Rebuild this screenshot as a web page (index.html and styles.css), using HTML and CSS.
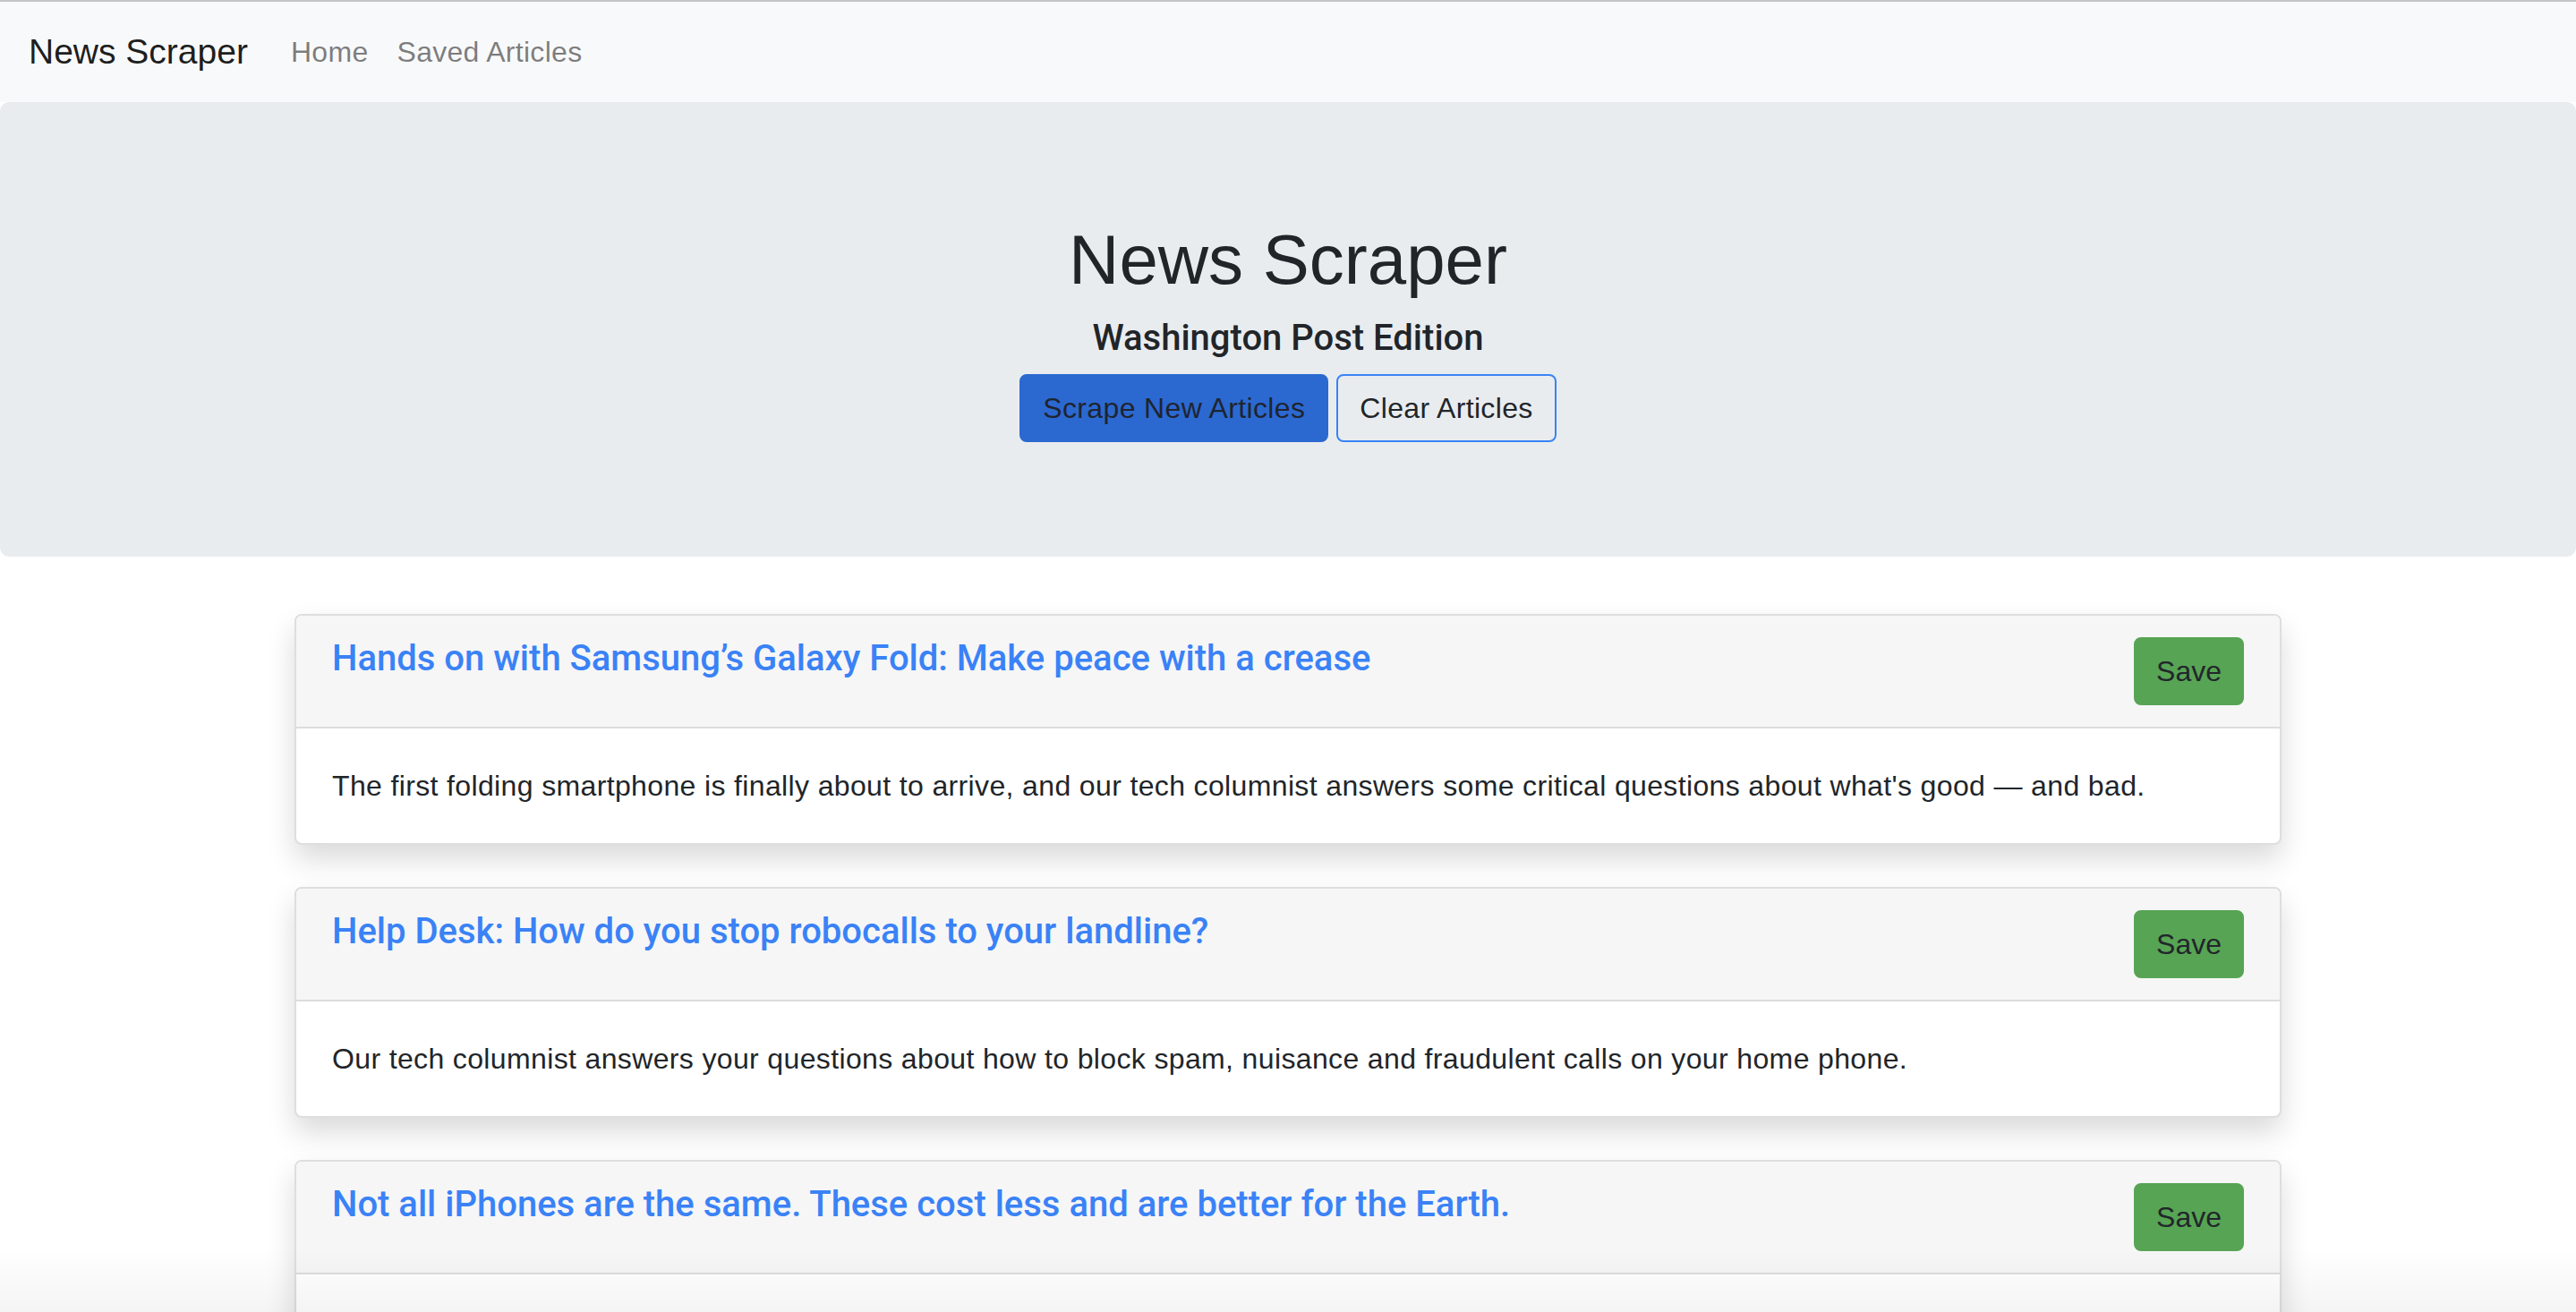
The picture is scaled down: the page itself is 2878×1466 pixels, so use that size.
FILE: index.html
```html
<!DOCTYPE html>
<html lang="en">
<head>
<meta charset="utf-8">
<title>News Scraper</title>
<link rel="stylesheet" href="styles.css">
</head>
<body>
<nav class="navbar">
  <a class="brand" href="#">News Scraper</a>
  <a class="nav-link" href="#">Home</a>
  <a class="nav-link" href="#">Saved Articles</a>
</nav>

<header class="jumbotron">
  <h1 class="jumbo-title">News Scraper</h1>
  <h5 class="jumbo-sub">Washington Post Edition</h5>
  <div class="jumbo-actions">
    <button class="btn btn-primary">Scrape New Articles</button>
    <button class="btn btn-outline">Clear Articles</button>
  </div>
</header>

<main class="container">
  <article class="card">
    <div class="card-header">
      <h5 class="card-title"><a href="#">Hands on with Samsung’s Galaxy Fold: Make peace with a crease</a></h5>
      <button class="btn btn-save">Save</button>
    </div>
    <div class="card-body">
      <p>The first folding smartphone is finally about to arrive, and our tech columnist answers some critical questions about what's good — and bad.</p>
    </div>
  </article>

  <article class="card">
    <div class="card-header">
      <h5 class="card-title"><a href="#">Help Desk: How do you stop robocalls to your landline?</a></h5>
      <button class="btn btn-save">Save</button>
    </div>
    <div class="card-body">
      <p>Our tech columnist answers your questions about how to block spam, nuisance and fraudulent calls on your home phone.</p>
    </div>
  </article>

  <article class="card">
    <div class="card-header">
      <h5 class="card-title"><a href="#">Not all iPhones are the same. These cost less and are better for the Earth.</a></h5>
      <button class="btn btn-save">Save</button>
    </div>
    <div class="card-body">
      <p>Refurbished phones can save you money and cut down on electronic waste.</p>
    </div>
  </article>
</main>

<div class="bottom-fade"></div>
</body>
</html>
```

FILE: styles.css
```css
* {
  box-sizing: border-box;
}

html, body {
  margin: 0;
  padding: 0;
}

body {
  font-family: "Liberation Sans", Arial, sans-serif;
  font-size: 32px;
  line-height: 1.5;
  color: #212529;
  background: #ffffff;
  border-top: 2px solid #c4c4c6;
}

a {
  text-decoration: none;
}

/* Navbar */
.navbar {
  display: flex;
  align-items: center;
  background: #f8f9fa;
  padding: 16px 32px;
}

.brand {
  font-size: 39px;
  line-height: 60px;
  padding: 10px 0;
  margin-right: 32px;
  color: rgba(0, 0, 0, 0.9);
}

.nav-link {
  padding: 16px;
  font-size: 32px;
  line-height: 48px;
  letter-spacing: 0.3px;
  color: rgba(0, 0, 0, 0.5);
}

/* Jumbotron */
.jumbotron {
  background: #e9ecef;
  padding: 128px 64px;
  margin-bottom: 64px;
  border-radius: 10px;
  text-align: center;
}

.jumbo-title {
  margin: 0 0 16px;
  font-size: 78px;
  line-height: 96px;
  font-weight: 400;
  color: #212529;
}

.jumbo-sub {
  margin: 0 0 16px;
  font-family: Roboto, "Liberation Sans", sans-serif;
  font-size: 40px;
  line-height: 48px;
  font-weight: 500;
  color: #212529;
}

.jumbo-actions {
  display: flex;
  justify-content: center;
  gap: 9px;
}

/* Buttons */
.btn {
  display: inline-block;
  font-family: "Liberation Sans", Arial, sans-serif;
  font-size: 32px;
  line-height: 48px;
  letter-spacing: 0.35px;
  padding: 12px 24px;
  border: 2px solid transparent;
  border-radius: 8px;
  color: #212529;
  background: transparent;
  cursor: pointer;
}

.btn-primary {
  background: #2b69d1;
  border-color: #2b69d1;
  color: #1f2430;
}

.btn-outline {
  background: transparent;
  border-color: #3a83f5;
  color: #212529;
}

.btn-save {
  flex: none;
  letter-spacing: 0;
  padding: 12px 23px;
  background: #57a454;
  border-color: #57a454;
  color: #22262b;
}

/* Cards */
.container {
  width: 2280px;
  margin: 0 auto;
  padding: 0 30px;
}

.card {
  border: 2px solid #dedede;
  border-radius: 8px;
  background: #ffffff;
  box-shadow: 0 16px 32px rgba(0, 0, 0, 0.15);
  margin-bottom: 47px;
  overflow: hidden;
}

.card-header {
  display: flex;
  justify-content: space-between;
  align-items: flex-start;
  background: #f6f6f6;
  padding: 24px 40px;
  border-bottom: 2px solid #dcdcdc;
}

.card-title {
  margin: 0;
  font-family: Roboto, "Liberation Sans", sans-serif;
  font-size: 40px;
  line-height: 48px;
  font-weight: 500;
}

.card-title a {
  color: #3a82f6;
}

.card-body {
  padding: 40px;
}

.card-body p {
  margin: 0;
  font-size: 32px;
  line-height: 48px;
  letter-spacing: 0.36px;
}

/* Window bottom shade */
.bottom-fade {
  position: fixed;
  left: 0;
  right: 0;
  bottom: 0;
  height: 70px;
  pointer-events: none;
  background: linear-gradient(to bottom, rgba(0, 0, 0, 0), rgba(0, 0, 0, 0.045));
}
```
